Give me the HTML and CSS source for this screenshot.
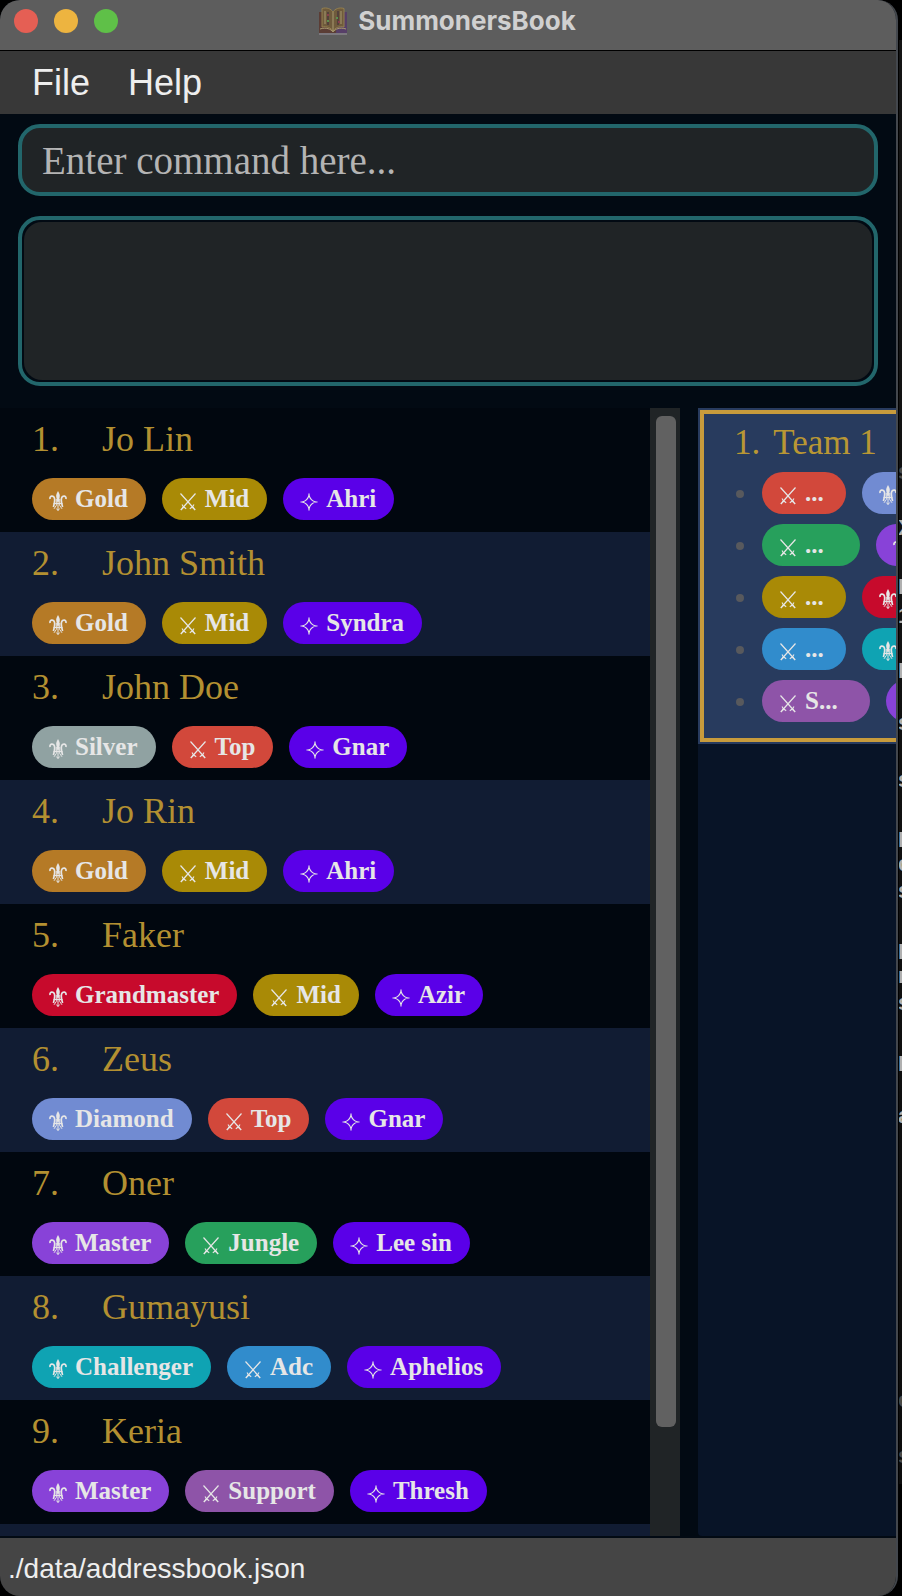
FILE: index.html
```
<!DOCTYPE html>
<html lang="en">
<head>
<meta charset="utf-8">
<title>SummonersBook</title>
<link rel="stylesheet" href="styles.css">
</head>
<body>
<svg class="sprite" aria-hidden="true">
  <symbol id="rank" viewBox="0 0 18 20">
    <path fill="currentColor" d="M9 0C7.600 2.300 6.800 4.200 7.300 6L8.300 11.500H9.700L10.700 6C11.200 4.200 10.400 2.300 9 0Z"/>
    <path fill="none" stroke="currentColor" stroke-width="1.700" d="M1.200 8C-.1 5 4.800 3.600 5.500 7.400C6 10 5.400 13 4.400 16M16.800 8C18.100 5 13.200 3.600 12.500 7.400C12 10 12.600 13 13.600 16"/>
    <path fill="none" stroke="currentColor" stroke-width="1" d="M4.500 12.500H13.500M9 11.500V19.500M7.300 8V14.500L5 17.800M10.700 8V14.500L13 17.800M7.300 17.500L9 19.500L10.700 17.500"/>
  </symbol>
  <symbol id="role" viewBox="0 0 18 20">
    <path fill="none" stroke="currentColor" stroke-width="1.200" d="M1.500 2.500L14.500 17M16.500 2.500L3.500 17"/>
    <path fill="none" stroke="currentColor" stroke-width="1.500" d="M1.800 19L4.800 15.800M16.200 19L13.200 15.800"/>
    <path fill="none" stroke="currentColor" stroke-width="1.100" d="M3 13.500L4.500 15.800L7.200 17.800M15 13.500L13.500 15.800L10.800 17.800"/>
  </symbol>
  <symbol id="champ" viewBox="0 0 18 20">
    <path fill="none" stroke="currentColor" stroke-width="1.200" d="M9 4Q10.200 9.800 16 11Q10.200 12.200 9 18Q7.800 12.200 2 11Q7.800 9.800 9 4ZM9 2.500V5M9 17V19.500M.5 11H3M15 11H17.500"/>
  </symbol>
</svg>
<aside class="backdrop" aria-hidden="true">
  <span class="dim" style="top:460px">s</span><span style="top:516px">X</span><span style="top:575px">I</span><span style="top:604px">1</span><span style="top:659px">I</span><span style="top:711px">s</span><span style="top:768px">s</span><span style="top:828px">I</span><span style="top:852px">c</span><span style="top:879px">s</span><span style="top:940px">I</span><span style="top:964px">r</span><span style="top:991px">s</span><span style="top:1052px">I</span><span style="top:1104px">a</span><span class="dim" style="top:1388px">o</span><span class="dim" style="top:1444px">s</span>
</aside>
<div class="window">
  <header class="titlebar">
    <div class="lights"><button class="light close" aria-label="Close"></button><button class="light minimise" aria-label="Minimise"></button><button class="light maximise" aria-label="Maximise"></button></div>
    <h1 class="title">
      <svg class="book" viewBox="0 0 30 28" aria-hidden="true">
        <path fill="#5b3d35" d="M1 5H29V26H1Z"/><path fill="#573f68" d="M20 5H29V26H18Z"/>
        <path fill="#6f5b3c" stroke="#94804f" d="M4 1.500C9 0 13 2 15 5C17 2 21 0 26 1.500V20C21 19 17 21 15 24C13 21 9 19 4 20Z"/>
        <path fill="none" stroke="#a89a70" d="M2 22C8 20 13 22 15 25C17 22 22 20 28 22M15 5V24M7 4V17M23 4V17"/>
        <path fill="none" stroke="#38283a" d="M10 5V18M20 4V18"/><path fill="#5c9050" d="M9 13H11V15H9ZM18 10H20V12H18Z"/><path fill="#893f4c" d="M9 7H11V9H9ZM20 14H22V16H20Z"/>
        <path stroke="#9b94a0" d="M1 27H29"/>
      </svg>
      SummonersBook
    </h1>
  </header>
  <nav class="menubar"><button>File</button><button>Help</button></nav>
  <div class="console">
    <input class="command" type="text" placeholder="Enter command here..." aria-label="Command">
    <output class="result" aria-label="Result"><span class="result-fill"></span></output>
  </div>
  <main class="split">
    <section class="people">
      <ol class="list">
        <li class="person"><div class="name"><span>1.</span><span>Jo Lin</span></div><div class="tags"><span class="tag gold"><svg><use href="#rank"/></svg>Gold</span><span class="tag mid"><svg><use href="#role"/></svg>Mid</span><span class="tag champ"><svg><use href="#champ"/></svg>Ahri</span></div></li>
        <li class="person"><div class="name"><span>2.</span><span>John Smith</span></div><div class="tags"><span class="tag gold"><svg><use href="#rank"/></svg>Gold</span><span class="tag mid"><svg><use href="#role"/></svg>Mid</span><span class="tag champ"><svg><use href="#champ"/></svg>Syndra</span></div></li>
        <li class="person"><div class="name"><span>3.</span><span>John Doe</span></div><div class="tags"><span class="tag silver"><svg><use href="#rank"/></svg>Silver</span><span class="tag top"><svg><use href="#role"/></svg>Top</span><span class="tag champ"><svg><use href="#champ"/></svg>Gnar</span></div></li>
        <li class="person"><div class="name"><span>4.</span><span>Jo Rin</span></div><div class="tags"><span class="tag gold"><svg><use href="#rank"/></svg>Gold</span><span class="tag mid"><svg><use href="#role"/></svg>Mid</span><span class="tag champ"><svg><use href="#champ"/></svg>Ahri</span></div></li>
        <li class="person"><div class="name"><span>5.</span><span>Faker</span></div><div class="tags"><span class="tag grandmaster"><svg><use href="#rank"/></svg>Grandmaster</span><span class="tag mid"><svg><use href="#role"/></svg>Mid</span><span class="tag champ"><svg><use href="#champ"/></svg>Azir</span></div></li>
        <li class="person"><div class="name"><span>6.</span><span>Zeus</span></div><div class="tags"><span class="tag diamond"><svg><use href="#rank"/></svg>Diamond</span><span class="tag top"><svg><use href="#role"/></svg>Top</span><span class="tag champ"><svg><use href="#champ"/></svg>Gnar</span></div></li>
        <li class="person"><div class="name"><span>7.</span><span>Oner</span></div><div class="tags"><span class="tag master"><svg><use href="#rank"/></svg>Master</span><span class="tag jungle"><svg><use href="#role"/></svg>Jungle</span><span class="tag champ"><svg><use href="#champ"/></svg>Lee sin</span></div></li>
        <li class="person"><div class="name"><span>8.</span><span>Gumayusi</span></div><div class="tags"><span class="tag challenger"><svg><use href="#rank"/></svg>Challenger</span><span class="tag adc"><svg><use href="#role"/></svg>Adc</span><span class="tag champ"><svg><use href="#champ"/></svg>Aphelios</span></div></li>
        <li class="person"><div class="name"><span>9.</span><span>Keria</span></div><div class="tags"><span class="tag master"><svg><use href="#rank"/></svg>Master</span><span class="tag support"><svg><use href="#role"/></svg>Support</span><span class="tag champ"><svg><use href="#champ"/></svg>Thresh</span></div></li>
        <li class="person"></li>
      </ol>
      <div class="track"><div class="thumb"></div></div>
    </section>
    <section class="teams">
      <article class="team">
        <h2 class="team-name"><span>1.</span><span>Team 1</span></h2>
        <ul class="members">
          <li><span class="tag top short"><svg><use href="#role"/></svg>...</span><span class="tag diamond"><svg><use href="#rank"/></svg></span></li>
          <li><span class="tag jungle medium"><svg><use href="#role"/></svg>...</span><span class="tag master"><svg><use href="#rank"/></svg></span></li>
          <li><span class="tag mid short"><svg><use href="#role"/></svg>...</span><span class="tag grandmaster"><svg><use href="#rank"/></svg></span></li>
          <li><span class="tag adc short"><svg><use href="#role"/></svg>...</span><span class="tag challenger"><svg><use href="#rank"/></svg></span></li>
          <li><span class="tag support long"><svg><use href="#role"/></svg>S...</span><span class="tag master"><svg><use href="#rank"/></svg></span></li>
        </ul>
      </article>
    </section>
  </main>
  <footer class="status">./data/addressbook.json</footer>
</div>
</body>
</html>
```
FILE: styles.css
```
* { box-sizing: border-box; }
body { margin: 0; background: #000; color: #e8e8e8; font-family: "Liberation Serif", serif; }
button { border: 0; padding: 0; background: none; color: inherit; font: inherit; }
ol, ul { list-style: none; margin: 0; padding: 0; }
.sprite { position: absolute; width: 0; height: 0; }
.backdrop { position: absolute; top: 0; right: 0; width: 3px; height: 100vh; overflow: hidden; background: linear-gradient(#000 40px, #141414 40px, #0c0c0c 1484px, #000 1484px); color: #b0b0b0; font: 700 22px/24px "Liberation Sans", sans-serif; }
.backdrop span { position: absolute; left: -1px; }
.backdrop .dim { color: #4a4a4a; }
.window { display: flex; flex-direction: column; height: 100vh; margin-right: 4px; border-right: 2px solid #43474d; border-radius: 20px; overflow: hidden; background: #020a13; }
.titlebar { display: grid; grid-template-columns: 1fr auto 1fr; align-items: center; height: 51px; padding: 0 16px 8px 14px; border-bottom: 1px solid #000; background: #5d5d5d; }
.lights { display: flex; gap: 16px; }
.light { width: 24px; height: 24px; border-radius: 50%; }
.close { background: #e55f54; }
.minimise { background: #edb440; }
.maximise { background: #5fc048; }
.title { display: flex; align-items: center; gap: 10px; margin: 0; color: #d0d0d0; font: 700 26px/32px Inter, sans-serif; }
.book { width: 30px; height: 28px; }
.menubar { display: flex; gap: 38px; height: 63px; flex: none; padding: 0 32px; background: #383838; font: 36px/62px "Liberation Sans", sans-serif; color: #eee; }
.console { display: flex; flex-direction: column; gap: 20px; padding: 10px 18px 22px; }
.command { width: 100%; height: 72px; padding: 0 20px; border: 4px solid #22666b; border-radius: 22px; background: #202426; color: #e8e8e8; font: 39px "Liberation Serif", serif; }
.command::placeholder { color: #b4b4b4; opacity: 1; }
.result { display: flex; height: 170px; padding: 2px; border: 4px solid #22666b; border-radius: 22px; }
.result-fill { flex: 1; border-radius: 18px; background: #202426; }
.split { flex: 1; min-height: 0; display: grid; grid-template-columns: minmax(0, 340fr) minmax(0, 99fr); grid-template-rows: minmax(0, 1fr); gap: 18px; padding-bottom: 2px; }
.people { display: flex; min-height: 0; }
.list { flex: 1; overflow: hidden; }
.person { display: flex; flex-direction: column; justify-content: space-between; height: 124px; padding: 12px 32px; background: #01070f; }
.person:nth-child(even) { background: #111c33; }
.name { display: flex; color: #b39031; font-size: 36px; line-height: 38px; }
.name span:first-child { width: 70px; }
.tags, .members li { display: flex; gap: 16px; }
.tag { display: flex; align-items: center; gap: 8px; flex: none; height: 42px; padding: 0 18px 0 17px; border-radius: 21px; color: #e6e6e6; font-weight: 700; font-size: 25px; line-height: 42px; white-space: nowrap; }
.tag svg { width: 18px; height: 20px; margin-top: 4px; }
.gold { background: #b57a26; }
.silver { background: #90a2a2; }
.grandmaster { background: #c70a2c; }
.diamond { background: #718bd2; }
.master { background: #8842d8; }
.challenger { background: #0fa3b3; }
.mid { background: #a98a06; }
.top { background: #d2483b; }
.jungle { background: #27a05c; }
.adc { background: #318ccc; }
.support { background: #8e54a8; }
.champ { background: #5a00e8; }
.track { width: 30px; padding: 8px 4px 0 6px; background: #202426; }
.thumb { height: calc(90% + 3px); border-radius: 6px; background: #616161; }
.teams { min-height: 0; overflow: hidden; border-radius: 0 0 0 4px; background: #081427; }
.team { margin: 2px -20px 0 2px; padding: 10px 0 16px 30px; border: 4px solid #c89b3c; outline: 2px solid #283b5e; background: #283b5e; overflow: hidden; }
.team-name { display: flex; gap: 13px; margin: 0 0 10px; color: #b99734; font-weight: 400; font-size: 35px; line-height: 38px; white-space: nowrap; }
.members { display: flex; flex-direction: column; gap: 10px; }
.members li { align-items: center; }
.members li::before { content: ""; flex: none; width: 8px; height: 8px; margin: 2px 2px 0; border-radius: 50%; background: #58595d; }
.short { width: 84px; }
.medium { width: 98px; }
.long { width: 108px; }
.status { flex: none; height: 58px; padding: 0 8px; background: #454545; font: 28px/62px "Liberation Sans", sans-serif; color: #eee; }
```
